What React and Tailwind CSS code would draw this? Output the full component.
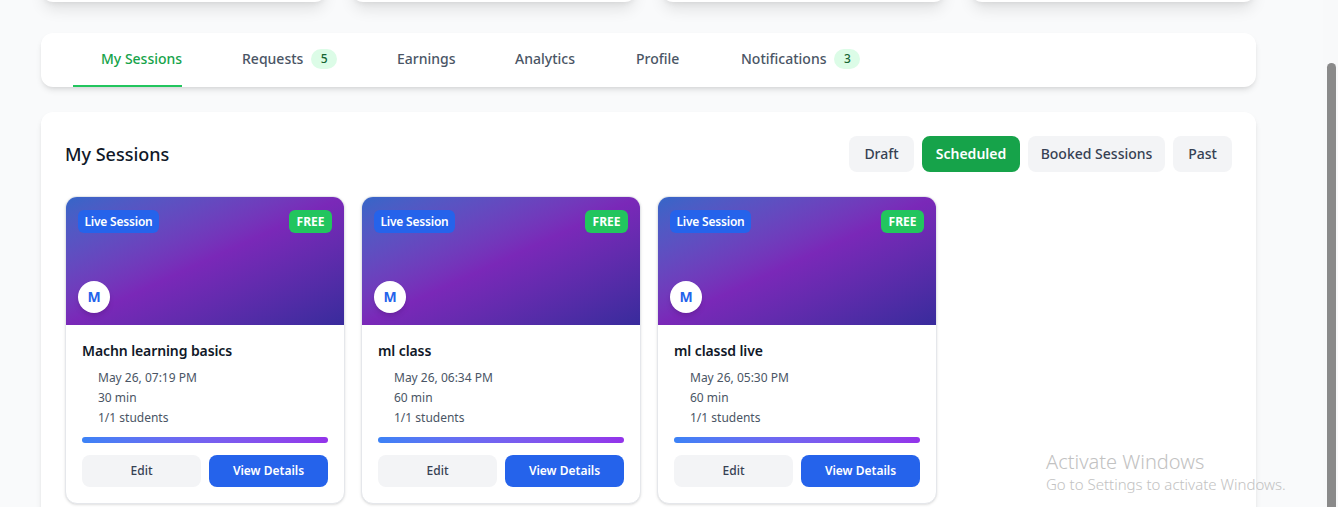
import React from "react";

const FONT = { fontFamily: '"Segoe UI", "Noto Sans", "Open Sans", sans-serif' };

const tabs = [
  { label: "My Sessions", w: "w-[109px]", active: true },
  { label: "Requests", w: "w-[123px]", badge: "5" },
  { label: "Earnings", w: "w-[86px]" },
  { label: "Analytics", w: "w-[89px]" },
  { label: "Profile", w: "w-[73px]" },
  { label: "Notifications", w: "w-[148px]", badge: "3" },
];

const filters = [
  { label: "Draft", w: "w-[65px]" },
  { label: "Scheduled", w: "w-[98px]", active: true },
  { label: "Booked Sessions", w: "w-[137px]" },
  { label: "Past", w: "w-[59px]" },
];

const sessions = [
  { title: "Machn learning basics", date: "May 26, 07:19 PM", dur: "30 min", students: "1/1 students" },
  { title: "ml class", date: "May 26, 06:34 PM", dur: "60 min", students: "1/1 students" },
  { title: "ml classd live", date: "May 26, 05:30 PM", dur: "60 min", students: "1/1 students" },
];

function SessionCard({ s }) {
  return (
    <div className="w-[280px] rounded-xl border border-gray-200 bg-white shadow-sm overflow-hidden">
      <div className="relative h-32 bg-gradient-to-br from-[#3466c8] via-[#7a28b8] to-[#382b9c]">
        <span className="absolute top-[13px] left-3 w-[81px] h-[23px] flex items-center justify-center rounded-md bg-[#2563eb] text-white text-xs font-semibold tracking-[-0.2px] whitespace-nowrap">
          Live Session
        </span>
        <span className="absolute top-[13px] right-3 w-[43px] h-[23px] flex items-center justify-center rounded-md bg-[#22c55e] text-white text-xs font-bold">
          FREE
        </span>
        <span className="absolute bottom-3 left-3 w-8 h-8 rounded-full bg-white flex items-center justify-center text-[#2563eb] text-sm font-bold shadow-md">
          M
        </span>
      </div>
      <div className="p-4">
        <h3 className="text-sm font-semibold text-gray-900 leading-5 mb-[9px] tracking-[-0.1px]">{s.title}</h3>
        <div className="flex flex-col gap-1 text-xs text-gray-600 leading-4 pl-4">
          <div>{s.date}</div>
          <div>{s.dur}</div>
          <div>{s.students}</div>
        </div>
        <div className="mt-[11px] h-1.5 rounded-full bg-gradient-to-r from-[#3b82f6] to-[#9333ea]" />
        <div className="mt-3 flex gap-2">
          <button className="flex-1 h-8 rounded-lg bg-gray-100 text-gray-700 text-xs font-medium">Edit</button>
          <button className="flex-1 h-8 rounded-lg bg-[#2563eb] text-white text-xs font-semibold">View Details</button>
        </div>
      </div>
    </div>
  );
}

export default function App() {
  return (
    <div className="relative h-[507px] overflow-hidden bg-[#f9fafb]" style={FONT}>
      <div className="ml-[41px] w-[1215px]">
        <div className="grid grid-cols-4 gap-6 mt-[-98px]">
          {[0, 1, 2, 3].map((i) => (
            <div key={i} className="h-[100px] rounded-xl bg-white shadow-lg" />
          ))}
        </div>

        <div className="mt-[31px] h-[54px] rounded-xl bg-white shadow-md flex gap-8 px-8">
          {tabs.map((t) => (
            <div
              key={t.label}
              className={`${t.w} flex items-center pl-7 text-sm font-medium border-b-2 ${
                t.active ? "border-[#22c55e] text-[#16a34a]" : "border-transparent text-gray-600"
              }`}
            >
              <span className="whitespace-nowrap">{t.label}</span>
              {t.badge && (
                <span className="ml-2 w-[26px] h-5 rounded-full bg-[#dcfce7] text-[#166534] text-xs flex items-center justify-center">
                  {t.badge}
                </span>
              )}
            </div>
          ))}
        </div>

        <div className="mt-[25px] rounded-xl bg-white shadow-md p-6 h-[460px]">
          <div className="flex items-center justify-between mb-6">
            <h2 className="text-lg text-gray-900 font-medium">My Sessions</h2>
            <div className="flex gap-2">
              {filters.map((f) => (
                <button
                  key={f.label}
                  className={`${f.w} h-9 rounded-lg text-sm whitespace-nowrap ${
                    f.active ? "bg-[#16a34a] text-white font-semibold" : "bg-gray-100 text-gray-700 font-medium"
                  }`}
                >
                  {f.label}
                </button>
              ))}
            </div>
          </div>
          <div className="flex gap-4">
            {sessions.map((s) => (
              <SessionCard key={s.title} s={s} />
            ))}
          </div>
        </div>
      </div>

      <div className="absolute left-[1046px] top-[450px] text-[#c2c2c2] pointer-events-none" style={FONT}>
        <div className="text-[20px] leading-6 font-light">Activate Windows</div>
        <div className="text-[15px] leading-5 font-light">Go to Settings to activate Windows.</div>
      </div>

      <div className="absolute right-0 top-0 bottom-0 w-[15px] bg-[#f8f9fa]">
        <div className="absolute left-[4px] top-[63px] bottom-0 w-[9px] rounded-t-full bg-[#8a8a8a]" />
      </div>
    </div>
  );
}
